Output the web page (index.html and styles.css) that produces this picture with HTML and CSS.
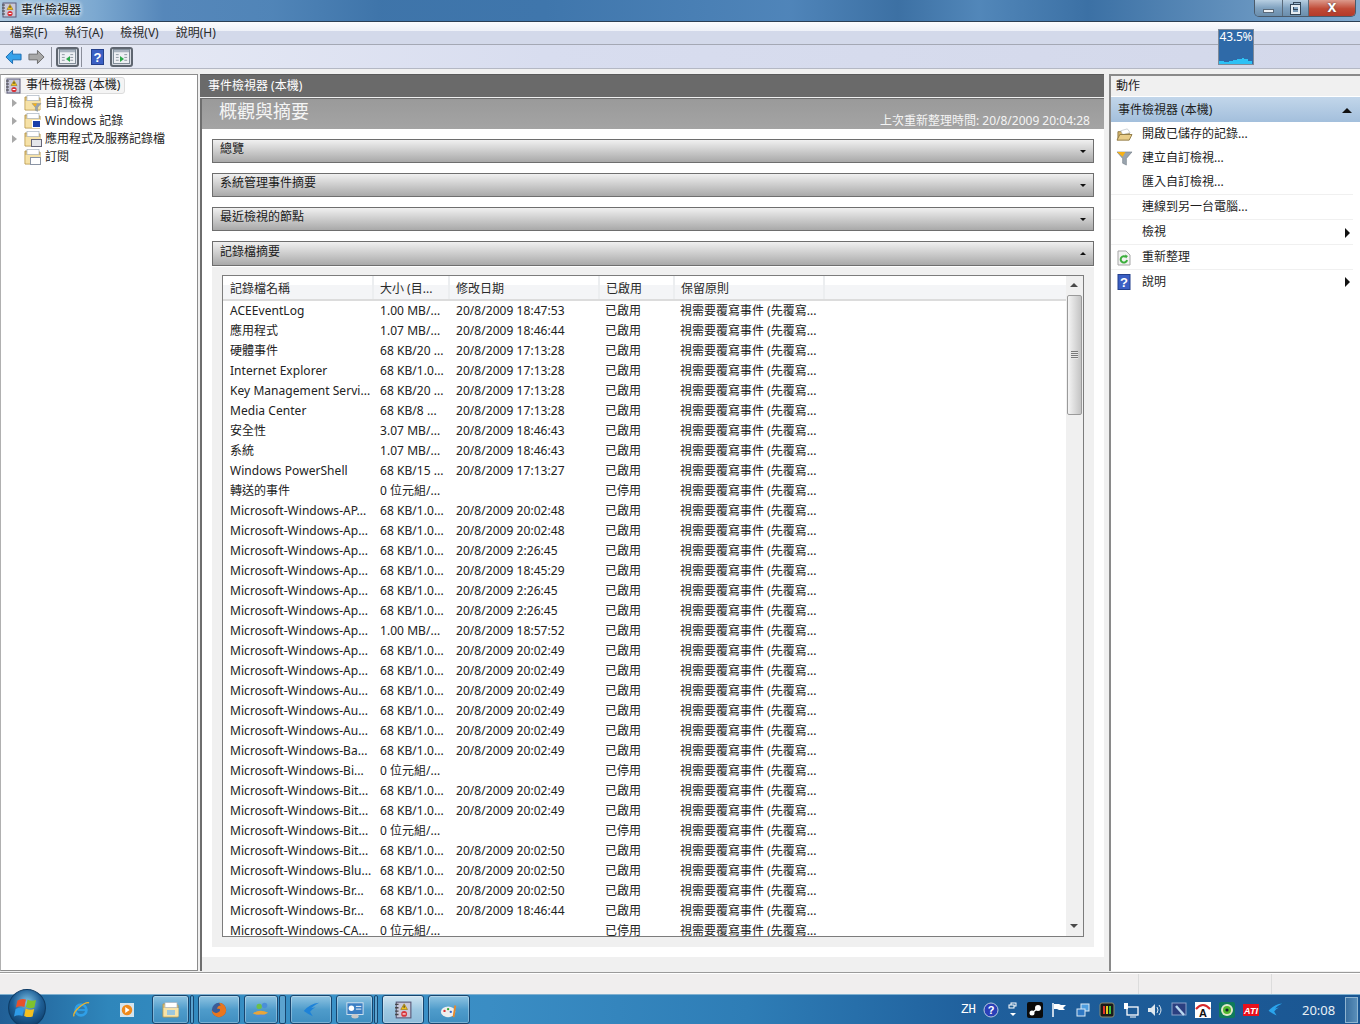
FILE: index.html
```html
<!DOCTYPE html>
<html lang="zh-Hant">
<head>
<meta charset="utf-8">
<title>事件檢視器</title>
<link rel="stylesheet" href="styles.css">
</head>
<body>
<svg class="defs" width="0" height="0">
  <defs>
    <symbol id="i-app" viewBox="0 0 16 16">
      <rect x="2" y="1" width="13" height="14" fill="#c8c8d8" stroke="#5a5a78"/>
      <path d="M1 3h3M1 6h3M1 9h3M1 12h3" stroke="#444" stroke-width="1.2"/>
      <path d="M9 2.5l3 5H6z" fill="#f2c21a" stroke="#8a6a00" stroke-width=".5"/>
      <rect x="8.5" y="4" width="1" height="2" fill="#333"/>
      <circle cx="9" cy="11.5" r="2.6" fill="#d8333a"/>
      <rect x="7.6" y="11" width="2.8" height="1" fill="#fff"/>
    </symbol>
    <symbol id="i-folder" viewBox="0 0 18 18">
      <path d="M1 3h6l1 1h8v12H1z" fill="#e8c879" stroke="#b89a52"/>
      <rect x="3" y="1.5" width="12" height="5" fill="#fff" stroke="#a8b4c0" stroke-width=".7"/>
      <path d="M1.5 7h15v8.500h-15z" fill="#f6e2a8"/>
    </symbol>
    <symbol id="i-open" viewBox="0 0 18 16">
      <path d="M2 14V5h5l1 1h6v2" fill="#d8b66a" stroke="#8f7a44"/>
      <path d="M5 4l7-2 3 4-8 2z" fill="#fff" stroke="#aab2ba" stroke-width=".6"/>
      <path d="M1 14l3-6h13l-3 6z" fill="#e8cc88" stroke="#8f7a44"/>
    </symbol>
    <symbol id="i-left" viewBox="0 0 18 16">
      <path d="M1 8l7-7v4h9v6H8v4z" fill="#37a2ea" stroke="#1a6ab0"/>
    </symbol>
    <symbol id="i-right" viewBox="0 0 18 16">
      <path d="M17 8l-7-7v4H1v6h9v4z" fill="#a8a8a8" stroke="#6a6a6a"/>
    </symbol>
    <symbol id="i-help" viewBox="0 0 13 16">
      <rect x=".5" y=".5" width="12" height="15" fill="#3b5fc4" stroke="#24408c"/>
      <text x="6.500" y="13" text-anchor="middle" font-size="13" font-family="Liberation Sans" font-weight="bold" fill="#fff">?</text>
    </symbol>
    <symbol id="i-pane" viewBox="0 0 18 16">
      <rect x=".5" y=".5" width="17" height="15" fill="#eef0f4" stroke="#7b8794"/>
      <rect x="1" y="1" width="16" height="2.500" fill="#a9b3bf"/>
      <path d="M3 6h3M3 9h3M3 12h3M12 6h3M12 9h3M12 12h3" stroke="#8a949e"/>
    </symbol>
    <symbol id="i-funnel" viewBox="0 0 18 16">
      <path d="M1 1h16l-6 7v7l-4-2V8z" fill="#9aa4ae" stroke="#6d7780" stroke-width=".6"/>
      <path d="M1 1h9l-3 5z" fill="#f7b115"/>
    </symbol>
    <symbol id="i-refresh" viewBox="0 0 14 16">
      <path d="M1 1h8l4 4v10H1z" fill="#f2f2f2" stroke="#a5a5a5"/>
      <path d="M10 10a3.200 3.200 0 1 1-1-3" fill="none" stroke="#3cae3c" stroke-width="2"/>
      <path d="M8 4.500l3 1.500-2 2.500z" fill="#3cae3c"/>
    </symbol>
  </defs>
</svg>

<div class="window">
  <header class="titlebar">
    <svg class="ico16"><use href="#i-app"/></svg>
    <span class="title-text">事件檢視器</span>
    <div class="caption-btns">
      <span class="cap cap-min"><i class="min-bar"></i></span>
      <span class="cap cap-max"><i class="max-back"></i><i class="max-front"></i></span>
      <span class="cap cap-close">x</span>
    </div>
  </header>

  <nav class="menubar">
    <span>檔案(F)</span><span>執行(A)</span><span>檢視(V)</span><span>說明(H)</span>
  </nav>

  <div class="toolbar">
    <svg class="tb-arrow"><use href="#i-left"/></svg>
    <svg class="tb-arrow tb-fwd"><use href="#i-right"/></svg>
    <i class="tb-sep tb-sep1"></i>
    <span class="tb-btn tb-btn1"><svg class="ico-pane"><use href="#i-pane"/></svg><i class="pane-tri pane-left"></i></span>
    <i class="tb-sep tb-sep2"></i>
    <svg class="tb-help"><use href="#i-help"/></svg>
    <span class="tb-btn tb-btn2"><svg class="ico-pane"><use href="#i-pane"/></svg><i class="pane-tri pane-right"></i></span>
  </div>

  <div class="cpu">
    <span class="cpu-val">43.5%</span>
    <svg class="cpu-graph" viewBox="0 0 34 6" preserveAspectRatio="none"><path d="M0 6V3h5v1h5V3h4V2h4V1h5V0h2v1h4v2h4v3z" fill="#2dc1f5"/></svg>
  </div>

  <main class="main">
    <aside class="tree">
      <div class="tree-root"><svg class="ico16"><use href="#i-app"/></svg><span>事件檢視器 (本機)</span></div>
      <div class="tree-row"><i class="twist"></i><span class="node-ico"><svg class="ico18"><use href="#i-folder"/></svg><svg class="badge"><use href="#i-funnel"/></svg></span><span>自訂檢視</span></div>
      <div class="tree-row"><i class="twist"></i><span class="node-ico"><svg class="ico18"><use href="#i-folder"/></svg><i class="badge-win"></i></span><span>Windows 記錄</span></div>
      <div class="tree-row"><i class="twist"></i><span class="node-ico"><svg class="ico18"><use href="#i-folder"/></svg><i class="badge-app"></i></span><span>應用程式及服務記錄檔</span></div>
      <div class="tree-row"><i class="twist twist-none"></i><span class="node-ico"><svg class="ico18"><use href="#i-folder"/></svg><i class="badge-sub"></i></span><span>訂閱</span></div>
    </aside>

    <section class="center">
      <div class="center-head">事件檢視器 (本機)</div>
      <div class="center-body">
        <div class="overview-head">
          <h1>概觀與摘要</h1>
          <span class="refreshed">上次重新整理時間: 20/8/2009 20:04:28</span>
        </div>
        <div class="sections">
          <div class="bar"><span>總覽</span><i class="caret-down"></i></div>
          <div class="bar"><span>系統管理事件摘要</span><i class="caret-down"></i></div>
          <div class="bar"><span>最近檢視的節點</span><i class="caret-down"></i></div>
          <div class="bar bar-open"><span>記錄檔摘要</span><i class="caret-up"></i></div>
          <div class="log-panel">
            <div class="list">
              <div class="list-scroll">
                <table class="log">
                  <colgroup><col class="c1"><col class="c2"><col class="c3"><col class="c4"><col class="c5"><col></colgroup>
                  <thead><tr><th>記錄檔名稱</th><th>大小 (目...</th><th>修改日期</th><th>已啟用</th><th>保留原則</th><th></th></tr></thead>
                  <tbody>
                    <tr><td class="lat">ACEEventLog</td><td class="lat">1.00 MB/...</td><td class="lat">20/8/2009 18:47:53</td><td>已啟用</td><td>視需要覆寫事件 (先覆寫...</td><td></td></tr>
                    <tr><td>應用程式</td><td class="lat">1.07 MB/...</td><td class="lat">20/8/2009 18:46:44</td><td>已啟用</td><td>視需要覆寫事件 (先覆寫...</td><td></td></tr>
                    <tr><td>硬體事件</td><td class="lat">68 KB/20 ...</td><td class="lat">20/8/2009 17:13:28</td><td>已啟用</td><td>視需要覆寫事件 (先覆寫...</td><td></td></tr>
                    <tr><td class="lat">Internet Explorer</td><td class="lat">68 KB/1.0...</td><td class="lat">20/8/2009 17:13:28</td><td>已啟用</td><td>視需要覆寫事件 (先覆寫...</td><td></td></tr>
                    <tr><td class="lat">Key Management Servi...</td><td class="lat">68 KB/20 ...</td><td class="lat">20/8/2009 17:13:28</td><td>已啟用</td><td>視需要覆寫事件 (先覆寫...</td><td></td></tr>
                    <tr><td class="lat">Media Center</td><td class="lat">68 KB/8 ...</td><td class="lat">20/8/2009 17:13:28</td><td>已啟用</td><td>視需要覆寫事件 (先覆寫...</td><td></td></tr>
                    <tr><td>安全性</td><td class="lat">3.07 MB/...</td><td class="lat">20/8/2009 18:46:43</td><td>已啟用</td><td>視需要覆寫事件 (先覆寫...</td><td></td></tr>
                    <tr><td>系統</td><td class="lat">1.07 MB/...</td><td class="lat">20/8/2009 18:46:43</td><td>已啟用</td><td>視需要覆寫事件 (先覆寫...</td><td></td></tr>
                    <tr><td class="lat">Windows PowerShell</td><td class="lat">68 KB/15 ...</td><td class="lat">20/8/2009 17:13:27</td><td>已啟用</td><td>視需要覆寫事件 (先覆寫...</td><td></td></tr>
                    <tr><td>轉送的事件</td><td>0 位元組/...</td><td></td><td>已停用</td><td>視需要覆寫事件 (先覆寫...</td><td></td></tr>
                    <tr><td class="lat">Microsoft-Windows-AP...</td><td class="lat">68 KB/1.0...</td><td class="lat">20/8/2009 20:02:48</td><td>已啟用</td><td>視需要覆寫事件 (先覆寫...</td><td></td></tr>
                    <tr><td class="lat">Microsoft-Windows-Ap...</td><td class="lat">68 KB/1.0...</td><td class="lat">20/8/2009 20:02:48</td><td>已啟用</td><td>視需要覆寫事件 (先覆寫...</td><td></td></tr>
                    <tr><td class="lat">Microsoft-Windows-Ap...</td><td class="lat">68 KB/1.0...</td><td class="lat">20/8/2009 2:26:45</td><td>已啟用</td><td>視需要覆寫事件 (先覆寫...</td><td></td></tr>
                    <tr><td class="lat">Microsoft-Windows-Ap...</td><td class="lat">68 KB/1.0...</td><td class="lat">20/8/2009 18:45:29</td><td>已啟用</td><td>視需要覆寫事件 (先覆寫...</td><td></td></tr>
                    <tr><td class="lat">Microsoft-Windows-Ap...</td><td class="lat">68 KB/1.0...</td><td class="lat">20/8/2009 2:26:45</td><td>已啟用</td><td>視需要覆寫事件 (先覆寫...</td><td></td></tr>
                    <tr><td class="lat">Microsoft-Windows-Ap...</td><td class="lat">68 KB/1.0...</td><td class="lat">20/8/2009 2:26:45</td><td>已啟用</td><td>視需要覆寫事件 (先覆寫...</td><td></td></tr>
                    <tr><td class="lat">Microsoft-Windows-Ap...</td><td class="lat">1.00 MB/...</td><td class="lat">20/8/2009 18:57:52</td><td>已啟用</td><td>視需要覆寫事件 (先覆寫...</td><td></td></tr>
                    <tr><td class="lat">Microsoft-Windows-Ap...</td><td class="lat">68 KB/1.0...</td><td class="lat">20/8/2009 20:02:49</td><td>已啟用</td><td>視需要覆寫事件 (先覆寫...</td><td></td></tr>
                    <tr><td class="lat">Microsoft-Windows-Ap...</td><td class="lat">68 KB/1.0...</td><td class="lat">20/8/2009 20:02:49</td><td>已啟用</td><td>視需要覆寫事件 (先覆寫...</td><td></td></tr>
                    <tr><td class="lat">Microsoft-Windows-Au...</td><td class="lat">68 KB/1.0...</td><td class="lat">20/8/2009 20:02:49</td><td>已啟用</td><td>視需要覆寫事件 (先覆寫...</td><td></td></tr>
                    <tr><td class="lat">Microsoft-Windows-Au...</td><td class="lat">68 KB/1.0...</td><td class="lat">20/8/2009 20:02:49</td><td>已啟用</td><td>視需要覆寫事件 (先覆寫...</td><td></td></tr>
                    <tr><td class="lat">Microsoft-Windows-Au...</td><td class="lat">68 KB/1.0...</td><td class="lat">20/8/2009 20:02:49</td><td>已啟用</td><td>視需要覆寫事件 (先覆寫...</td><td></td></tr>
                    <tr><td class="lat">Microsoft-Windows-Ba...</td><td class="lat">68 KB/1.0...</td><td class="lat">20/8/2009 20:02:49</td><td>已啟用</td><td>視需要覆寫事件 (先覆寫...</td><td></td></tr>
                    <tr><td class="lat">Microsoft-Windows-Bi...</td><td>0 位元組/...</td><td></td><td>已停用</td><td>視需要覆寫事件 (先覆寫...</td><td></td></tr>
                    <tr><td class="lat">Microsoft-Windows-Bit...</td><td class="lat">68 KB/1.0...</td><td class="lat">20/8/2009 20:02:49</td><td>已啟用</td><td>視需要覆寫事件 (先覆寫...</td><td></td></tr>
                    <tr><td class="lat">Microsoft-Windows-Bit...</td><td class="lat">68 KB/1.0...</td><td class="lat">20/8/2009 20:02:49</td><td>已啟用</td><td>視需要覆寫事件 (先覆寫...</td><td></td></tr>
                    <tr><td class="lat">Microsoft-Windows-Bit...</td><td>0 位元組/...</td><td></td><td>已停用</td><td>視需要覆寫事件 (先覆寫...</td><td></td></tr>
                    <tr><td class="lat">Microsoft-Windows-Bit...</td><td class="lat">68 KB/1.0...</td><td class="lat">20/8/2009 20:02:50</td><td>已啟用</td><td>視需要覆寫事件 (先覆寫...</td><td></td></tr>
                    <tr><td class="lat">Microsoft-Windows-Blu...</td><td class="lat">68 KB/1.0...</td><td class="lat">20/8/2009 20:02:50</td><td>已啟用</td><td>視需要覆寫事件 (先覆寫...</td><td></td></tr>
                    <tr><td class="lat">Microsoft-Windows-Br...</td><td class="lat">68 KB/1.0...</td><td class="lat">20/8/2009 20:02:50</td><td>已啟用</td><td>視需要覆寫事件 (先覆寫...</td><td></td></tr>
                    <tr><td class="lat">Microsoft-Windows-Br...</td><td class="lat">68 KB/1.0...</td><td class="lat">20/8/2009 18:46:44</td><td>已啟用</td><td>視需要覆寫事件 (先覆寫...</td><td></td></tr>
                    <tr><td class="lat">Microsoft-Windows-CA...</td><td>0 位元組/...</td><td></td><td>已停用</td><td>視需要覆寫事件 (先覆寫...</td><td></td></tr>
                  </tbody>
                </table>
              </div>
              <div class="scrollbar">
                <i class="sb-arrow sb-up"></i>
                <div class="sb-thumb"><i class="sb-grip"></i></div>
                <i class="sb-fill"></i>
                <i class="sb-arrow sb-down"></i>
              </div>
            </div>
          </div>
        </div>
        <div class="center-foot"></div>
      </div>
    </section>

    <aside class="actions">
      <div class="actions-head">動作</div>
      <div class="actions-sub"><span>事件檢視器 (本機)</span><i class="caret-up-lg"></i></div>
      <ul class="action-list">
        <li class="action a23"><span class="act-ico"><svg class="ico-act"><use href="#i-open"/></svg></span><span>開啟已儲存的記錄...</span></li>
        <li class="action a24"><span class="act-ico"><svg class="ico-act"><use href="#i-funnel"/></svg></span><span>建立自訂檢視...</span></li>
        <li class="action a26 sep"><span class="act-ico"></span><span>匯入自訂檢視...</span></li>
        <li class="action sep"><span class="act-ico"></span><span>連線到另一台電腦...</span></li>
        <li class="action sep"><span class="act-ico"></span><span class="grow">檢視</span><i class="submenu"></i></li>
        <li class="action sep"><span class="act-ico"><svg class="ico16"><use href="#i-refresh"/></svg></span><span>重新整理</span></li>
        <li class="action a-last"><span class="act-ico"><svg class="ico16"><use href="#i-help"/></svg></span><span class="grow">說明</span><i class="submenu"></i></li>
      </ul>
    </aside>
  </main>

  <footer class="status"><span class="st-a"></span><span class="st-b"></span><span class="st-c"></span></footer>

  <div class="taskbar">
    <div class="orb">
      <svg viewBox="0 0 36 36" class="orb-svg">
        <defs><radialGradient id="og" cx=".5" cy=".35" r=".7"><stop offset="0" stop-color="#7fc4e8"/><stop offset=".55" stop-color="#1f5f96"/><stop offset="1" stop-color="#0c3a66"/></radialGradient></defs>
        <circle cx="18" cy="18" r="17.500" fill="url(#og)" stroke="#0e3c66"/>
        <path d="M9 11q4-2.500 8-1l-1.500 7q-4-1.500-8 .5z" fill="#e8502a"/>
        <path d="M18.500 10q4 2 8 .5l-1.500 7q-4 1.500-8-.5z" fill="#7fc22e"/>
        <path d="M7.200 19q4-2 8-.5l-1.500 7q-4-1.500-8 .5z" fill="#2f9be8"/>
        <path d="M16.800 18.500q4 2 8 .5l-1.500 7q-4 1.500-8-.5z" fill="#f4c020"/>
      </svg>
    </div>
    <div class="quick">
      <svg class="tk-ico" viewBox="0 0 20 20"><circle cx="10" cy="10" r="6" fill="none" stroke="#2f9fe8" stroke-width="3"/><path d="M6 10h10" stroke="#2f9fe8" stroke-width="2"/><path d="M2 17Q1 13 8 7t11-5" fill="none" stroke="#f0b429" stroke-width="1.500"/></svg>
      <svg class="tk-media" viewBox="0 0 16 16"><rect width="16" height="16" fill="#d4e4ee"/><circle cx="8" cy="8" r="6" fill="#f08a1d"/><path d="M6 4.500l5 3.500-5 3.500z" fill="#fff"/></svg>
    </div>
    <div class="tasks">
      <span class="task t37"><svg class="tk-ico" viewBox="0 0 18 18"><use href="#i-folder"/><rect x="5" y="9" width="8" height="5" fill="#9cc7de"/></svg></span>
      <i class="task-end"></i>
      <span class="task t43"><svg class="tk-ico" viewBox="0 0 20 20"><circle cx="10" cy="10" r="8" fill="#3a5c98"/><path d="M10 2a8 8 0 1 1-8 8q2 4 6 3t3-4q-2-1-3 0 0-4 4-4z" fill="#e8761e"/></svg></span>
      <span class="task t35"><svg class="tk-ico" viewBox="0 0 20 20"><circle cx="8" cy="6" r="3" fill="#6cc04a"/><circle cx="14" cy="5" r="3" fill="#4a8fd8"/><path d="M1 14q7-6 17-1-8 5-17 1z" fill="#e8a53a"/><path d="M3 16q7-2 14 0l-3 2H6z" fill="#4a8fd8"/></svg></span>
      <i class="task-end task-end-wide"></i>
      <span class="task t43"><svg class="tk-ico" viewBox="0 0 20 20"><path d="M2 11Q9 3 19 2q-6 3-9 6l5-1q-4 2-6 5l3 5q-6-3-10-6z" fill="#1e82d8"/></svg></span>
      <span class="task t37"><svg class="tk-ico" viewBox="0 0 20 20"><rect x="1" y="2" width="18" height="13" fill="#3b7fc4" stroke="#dbe8f2"/><circle cx="6" cy="8" r="3" fill="#fff"/><path d="M11 6h6M11 9h6" stroke="#fff"/><ellipse cx="10" cy="17" rx="4" ry="2.500" fill="#c8c8c8"/></svg></span>
      <i class="task-end"></i>
      <span class="task t43 task-active"><svg class="tk-ico"><use href="#i-app"/></svg></span>
      <span class="task t43"><svg class="tk-ico" viewBox="0 0 20 20"><ellipse cx="9" cy="12" rx="8" ry="6" fill="#eee"/><circle cx="5" cy="11" r="1.300" fill="#d33"/><circle cx="9" cy="9" r="1.300" fill="#3a3"/><circle cx="12" cy="12" r="1.300" fill="#36c"/><path d="M15 18l2-13" stroke="#e8882a" stroke-width="2"/></svg></span>
    </div>
    <div class="tray">
      <span class="lang">ZH</span>
      <svg class="tr tr-tight" viewBox="0 0 16 16"><circle cx="8" cy="8" r="7" fill="#2a3fb8" stroke="#b8c8e0"/><text x="8" y="12" text-anchor="middle" font-size="11" font-family="Liberation Sans" font-weight="bold" fill="#fff">?</text></svg>
      <svg class="tr tr-tight" viewBox="0 0 16 16"><rect x="6" y="1" width="5" height="3" fill="none" stroke="#fff"/><rect x="4" y="3" width="5" height="3" fill="#1f5f96" stroke="#fff"/><path d="M5 11h6l-3 3z" fill="#fff"/></svg>
      <svg class="tr" viewBox="0 0 16 16"><rect width="16" height="16" rx="2" fill="#0b0b0b"/><circle cx="11" cy="6" r="3" fill="#fff"/><circle cx="5" cy="11" r="2.500" fill="#fff"/><path d="M5 11l6-5" stroke="#fff" stroke-width="1.500"/></svg>
      <svg class="tr" viewBox="0 0 16 16"><path d="M2 1v14" stroke="#fff" stroke-width="1.500"/><path d="M3 2h5l2 1h5l-3 3 2 2h-6l-2-1H3z" fill="#fff"/></svg>
      <svg class="tr" viewBox="0 0 16 16"><rect x="6" y="2" width="8" height="7" fill="#4f9ee0" stroke="#dceaf5"/><rect x="2" y="7" width="8" height="7" fill="#2f78c4" stroke="#dceaf5"/></svg>
      <svg class="tr" viewBox="0 0 16 16"><rect x="1" y="1" width="14" height="14" rx="2" fill="#1a1a1a" stroke="#8a8a70"/><path d="M5 4v8" stroke="#e0342a" stroke-width="2"/><path d="M8 4v8" stroke="#e8c820" stroke-width="2"/><path d="M11 4v8" stroke="#34c040" stroke-width="2"/></svg>
      <svg class="tr" viewBox="0 0 16 16"><rect x="4" y="5" width="11" height="8" fill="none" stroke="#fff" stroke-width="1.300"/><rect x="1" y="1" width="4" height="6" fill="#fff"/><path d="M7 15h6" stroke="#fff"/></svg>
      <svg class="tr" viewBox="0 0 16 16"><path d="M1 6h3l4-4v12l-4-4H1z" fill="#dfe8ef"/><path d="M10 5q2 3 0 6M12 3q4 5 0 10" fill="none" stroke="#dfe8ef"/></svg>
      <svg class="tr" viewBox="0 0 16 16"><rect x="1" y="1" width="14" height="12" fill="#2b3f80" stroke="#8ca0c8"/><path d="M5 4l8 9" stroke="#b8d8f0" stroke-width="2.500"/></svg>
      <svg class="tr" viewBox="0 0 16 16"><rect width="16" height="16" fill="#fff"/><path d="M1 7Q8-1 15 7" fill="none" stroke="#d8282a" stroke-width="2"/><text x="8" y="15" text-anchor="middle" font-size="11" font-family="Liberation Sans" font-weight="bold" fill="#111">A</text></svg>
      <svg class="tr" viewBox="0 0 16 16"><rect width="16" height="16" rx="2" fill="#0e7a5a"/><circle cx="8" cy="8" r="6" fill="#e0e8c8"/><circle cx="8" cy="8" r="4" fill="#52b82e"/><circle cx="8" cy="8" r="1.600" fill="#123"/></svg>
      <svg class="tr" viewBox="0 0 16 16"><rect y="2" width="16" height="12" fill="#e8101c"/><text x="8" y="11.500" text-anchor="middle" font-size="9" font-family="Liberation Sans" font-weight="bold" font-style="italic" fill="#fff">ATI</text></svg>
      <svg class="tr" viewBox="0 0 20 20"><path d="M2 11Q9 3 19 2q-6 3-9 6l5-1q-4 2-6 5l3 5q-6-3-10-6z" fill="#2aa4ec"/></svg>
      <span class="clock">20:08</span>
      <i class="show-desktop"></i>
    </div>
  </div>
</div>
</body>
</html>
```

FILE: styles.css
```css
* { box-sizing: border-box; }
html, body { margin: 0; padding: 0; }
body {
  width: 1360px;
  height: 1024px;
  overflow: hidden;
  font: 12px/1.2 "Noto Sans", "Noto Sans CJK TC", sans-serif;
  color: #1e1e1e;
  background: #f0f0f0;
}
.defs { position: absolute; }
i { display: block; }
svg { display: block; }
.ico16 { width: 16px; height: 16px; flex: none; }
.ico18 { width: 18px; height: 18px; flex: none; }
.ico-act { width: 17px; height: 15px; }

.window { position: relative; display: flex; flex-direction: column; height: 1024px; }

/* title bar */
.titlebar {
  display: flex; align-items: center; gap: 4px;
  height: 22px; padding: 0 4px 1px 1px; flex: none;
  border-bottom: 1px solid #2b3f55;
  background:
    linear-gradient(90deg, rgba(190,214,232,.85) 0, rgba(150,190,224,.7) 7%, rgba(108,152,200,.5) 12%, rgba(120,166,210,.3) 20%, rgba(60,110,160,.2) 28%, rgba(60,110,160,0) 40%, rgba(110,160,210,.35) 58%, rgba(50,90,130,.2) 66%, rgba(110,160,205,.4) 72%, rgba(45,90,135,.2) 80%, rgba(160,195,225,.7) 100%),
    #3f76ac;
}
.title-text { font-size: 12px; color: #111; text-shadow: 0 0 4px #fff, 0 0 4px #fff; }
.caption-btns {
  margin-left: auto; display: flex; align-self: flex-start; height: 17px;
  border: 1px solid #4a5a6a; border-top: 0; border-radius: 0 0 5px 5px; overflow: hidden;
}
.cap { display: flex; align-items: center; justify-content: center; position: relative; height: 16px; border-right: 1px solid #5a6a7a; background: linear-gradient(#b8cfe2, #80a2c0 50%, #6b8eac); }
.cap-min { width: 28px; }
.cap-max { width: 26px; }
.cap-close { width: 46px; border-right: 0; padding-bottom: 3px; background: linear-gradient(#dc9a8c, #c04a36 55%, #b43a2a); color: #fff; font: bold 16px/13px "Liberation Sans", sans-serif; text-shadow: 0 0 2px #444; }
.min-bar { width: 11px; height: 4px; margin-top: 5px; background: #eef2f6; border: 1px solid #5a6a7a; }
.max-back { position: absolute; left: 10px; top: 2px; width: 8px; height: 8px; border: 1px solid #33475a; }
.max-front { position: absolute; left: 8px; top: 5px; width: 9px; height: 9px; border: 2px solid #e4ecf2; outline: 1px solid #33475a; }

/* menu + toolbar */
.menubar {
  display: flex; align-items: center; gap: 17px;
  height: 23px; padding: 0 10px; flex: none;
  background: linear-gradient(#fbfcfe 0, #eef1f8 40%, #d3d9ea 41%, #d3d9ea 100%);
  border-bottom: 1px solid #a4a8b4;
  color: #2a2a2a;
}
.toolbar {
  display: flex; align-items: center;
  height: 24px; padding: 0 5px; flex: none;
  background: linear-gradient(90deg, #e9ecf6 0, #d8ddef 40%, #d3d8ea 100%);
  border-bottom: 1px solid #b4b8c4;
}
.tb-arrow { width: 17px; height: 16px; }
.tb-fwd { margin-left: 6px; }
.tb-sep { width: 1px; height: 20px; background: #8a8e9a; }
.tb-sep1 { margin-left: 6px; }
.tb-sep2 { margin-left: 2px; }
.tb-btn { position: relative; display: flex; align-items: center; justify-content: center; width: 23px; height: 20px; background: #d8dce4; border: 2px solid #5f6670; border-radius: 3px; }
.tb-btn1 { margin-left: 4px; }
.tb-btn2 { margin-left: 6px; }
.ico-pane { width: 17px; height: 15px; }
.tb-help { width: 13px; height: 16px; margin-left: 9px; }
.pane-tri { position: absolute; top: 7px; left: 8px; width: 0; height: 0; border-top: 3px solid transparent; border-bottom: 3px solid transparent; }
.pane-left { border-right: 4px solid #2aa848; }
.pane-right { border-left: 4px solid #2aa848; }

.cpu { position: absolute; left: 1218px; top: 29px; width: 36px; height: 36px; background: #2f6aa8; border: 1px solid #7f8a99; display: flex; flex-direction: column; color: #fff; overflow: hidden; }
.cpu-val { font: 12px/14px "Noto Sans", sans-serif; text-align: center; letter-spacing: -.2px; }
.cpu-graph { width: 34px; height: 6px; margin-top: auto; }

/* main */
.main { flex: none; display: flex; height: 899px; margin-top: 5px; background: #f0f0f0; border-bottom: 1px solid #9a9a9a; }

.tree { flex: none; width: 198px; height: 897px; background: #fff; border: 1px solid #8c8c8c; border-left-color: #b0b0b0; padding: 2px 3px; }
.tree-root { display: flex; align-items: center; gap: 5px; width: 121px; height: 17px; background: #f4f4f4; border: 1px solid #dcdcdc; border-radius: 3px; white-space: nowrap; }
.tree-row { display: flex; align-items: center; height: 18px; white-space: nowrap; padding-left: 8px; }
.twist { width: 0; height: 0; margin-right: 7px; border-top: 4px solid transparent; border-bottom: 4px solid transparent; border-left: 5px solid #a8a8a8; }
.twist-none { border-left-color: transparent; }
.node-ico { position: relative; flex: none; width: 18px; height: 18px; margin-right: 3px; }
.badge { position: absolute; left: 7px; top: 9px; width: 11px; height: 9px; }
.badge-win { position: absolute; left: 8px; top: 8px; width: 9px; height: 8px; background: #1a3fa8; border: 1px solid #fff; }
.badge-app { position: absolute; left: 7px; top: 9px; width: 11px; height: 8px; background: #e4e6ea; border: 1px solid #667; }
.badge-sub { position: absolute; left: 6px; top: 9px; width: 11px; height: 8px; background: #fff; border: 1px solid #8a94a4; }

.center { flex: none; width: 904px; margin-left: 2px; display: flex; flex-direction: column; height: 897px; }
.center-head { height: 23px; line-height: 21px; padding-left: 8px; flex: none; background: #6a6a6a; color: #fff; border-top: 1px solid #5a5a5a; }
.center-body { flex: 1; display: flex; flex-direction: column; margin-top: 1px; background: #fff; border-left: 2px solid #6e6e6e; border-top: 1px solid #6e6e6e; min-height: 0; }
.overview-head { display: flex; height: 30px; flex: none; background: linear-gradient(#9a9a9a, #a4a4a4); color: #fff; padding: 0 14px 0 17px; justify-content: space-between; }
.overview-head h1 { margin: 0; font-size: 18px; font-weight: 400; line-height: 24px; color: #f4f4f4; }
.refreshed { align-self: flex-end; font-size: 12px; line-height: 16px; color: #f4f4f4; }

.sections { padding: 10px 10px 0; display: flex; flex-direction: column; flex: none; }
.bar { display: flex; align-items: center; justify-content: space-between; height: 24px; margin-bottom: 10px; padding: 0 7px; border: 1px solid #6e6e6e; background: linear-gradient(#f0f0f0, #a9a9a9); color: #1a1a1a; }
.bar span { margin-top: -3px; }
.bar-open { height: 25px; margin-bottom: 1px; }
.caret-down { width: 0; height: 0; border-left: 3px solid transparent; border-right: 3px solid transparent; border-top: 3px solid #111; }
.caret-up { width: 0; height: 0; border-left: 3px solid transparent; border-right: 3px solid transparent; border-bottom: 3px solid #111; }

.log-panel { height: 680px; padding: 8px 10px 10px; background: #f0f0f0; }
.list { display: flex; height: 662px; background: #fff; border: 1px solid #7c7c7c; }
.list-scroll { flex: 1; min-width: 0; overflow: hidden; }
.log { width: 100%; border-collapse: collapse; table-layout: fixed; }
.c1 { width: 150px; }
.c2 { width: 76px; }
.c3 { width: 150px; }
.c4 { width: 75px; }
.c5 { width: 150px; }
.log th { height: 24px; padding: 3px 0 0 6px; font-weight: 400; text-align: left; white-space: nowrap; color: #2a2a2a; background: linear-gradient(#fff 0, #fff 40%, #f4f5f7 41%); border-bottom: 2px solid #dcdcdc; border-right: 2px solid #eceef0; }
.log th:first-child { padding-left: 7px; }
.log th:last-child { border-right: 0; }
.log td { height: 20px; padding: 2px 0 0 7px; white-space: nowrap; overflow: hidden; color: #222; }
.log td:nth-child(n+4) { padding-left: 6px; }
.lat { letter-spacing: .05px; }

.scrollbar { flex: none; width: 17px; display: flex; flex-direction: column; background: #f0f0f0; }
.sb-arrow { flex: none; height: 19px; position: relative; }
.sb-up::after, .sb-down::after { content: ""; position: absolute; left: 4px; width: 0; height: 0; border-left: 4px solid transparent; border-right: 4px solid transparent; }
.sb-up::after { top: 7px; border-bottom: 4px solid #4a4a4a; }
.sb-down::after { top: 7px; border-top: 4px solid #4a4a4a; }
.sb-thumb { flex: none; height: 120px; margin: 0 1px; display: flex; align-items: center; justify-content: center; border: 1px solid #9a9a9a; border-radius: 2px; background: linear-gradient(90deg, #f4f4f4, #dcdcdc 50%, #c4c4c4); }
.sb-grip { width: 7px; height: 8px; background: repeating-linear-gradient(#7a7a7a 0, #7a7a7a 1px, #e8e8e8 1px, #e8e8e8 2px); }
.sb-fill { flex: 1; }

.center-foot { flex: 1; margin-top: 10px; background: #f0f0f0; }

.actions { flex: none; width: 251px; margin-left: 5px; height: 897px; display: flex; flex-direction: column; background: #fff; border-left: 2px solid #8a8a8a; border-top: 2px solid #8a8a8a; }
.actions-head { height: 21px; line-height: 19px; padding-left: 5px; flex: none; background: #f0f0f0; border-bottom: 1px solid #fff; }
.actions-sub { display: flex; align-items: center; justify-content: space-between; height: 25px; padding: 1px 8px 0 7px; flex: none; background: linear-gradient(#c2d6ea, #a3bfdc); }
.caret-up-lg { width: 0; height: 0; border-left: 5px solid transparent; border-right: 5px solid transparent; border-bottom: 5px solid #111; }
.action-list { list-style: none; margin: 0; padding: 0; }
.action { display: flex; align-items: center; height: 25px; margin: 0 7px 0 0; padding: 1px 3px 0 5px; }
.a23 { height: 23px; padding-top: 2px; }
.a24 { height: 24px; padding-top: 2px; }
.a26 { height: 26px; }
.a-last { padding: 0 3px 1px 5px; }
.action.sep { border-bottom: 1px solid #f0f0f0; }
.act-ico { flex: none; width: 26px; }
.grow { flex: 1; }
.submenu { width: 0; height: 0; border-top: 5px solid transparent; border-bottom: 5px solid transparent; border-left: 5px solid #111; }

/* status */
.status { flex: none; display: flex; height: 21px; background: #f0eeee; border-top: 1px solid #fff; }
.st-a { width: 1139px; border-right: 1px solid #dcdcdc; }
.st-b { width: 133px; border-right: 1px solid #dcdcdc; }
.st-c { flex: 1; }

/* taskbar */
.taskbar {
  flex: none; display: flex; align-items: center; height: 30px; position: relative;
  background: linear-gradient(90deg, #215f96 0, #2f86bb 8%, #3a92c8 25%, #3a8dc4 36%, #2e7db6 55%, #1f5f9c 72%, #1a5692 100%);
  border-top: 1px solid #7fb0d0;
}
.orb { position: absolute; left: 8px; bottom: -3px; width: 38px; height: 38px; }
.orb-svg { width: 38px; height: 38px; }
.quick { display: flex; align-items: center; gap: 30px; margin-left: 72px; }
.tk-ico { width: 18px; height: 18px; flex: none; }
.tk-media { width: 14px; height: 14px; flex: none; }
.tasks { display: flex; align-items: center; gap: 4px; margin-left: 18px; height: 29px; }
.task { display: flex; align-items: center; justify-content: center; height: 29px; border: 1px solid #17456e; border-radius: 3px; background: linear-gradient(#8fc4e2, #4f9ccb 50%, #3f8ec0); box-shadow: inset 0 0 0 1px rgba(255,255,255,.3); }
.t37 { width: 37px; }
.t43 { width: 42px; }
.t35 { width: 34px; }
.task-active { background: linear-gradient(#cfe4f1, #9fc9e2 50%, #8fbcda); }
.task-end { width: 4px; height: 29px; margin-left: -3px; border: 1px solid #17456e; border-radius: 2px; background: #5ba3cf; }
.task-end-wide { width: 7px; }
.tray { margin-left: auto; display: flex; align-items: center; height: 29px; color: #fff; }
.lang { font: 13px "Liberation Mono", monospace; width: 22px; letter-spacing: -.5px; }
.tr { width: 16px; height: 16px; flex: none; margin-right: 8px; }
.tr-tight { margin-right: 6px; }
.clock { width: 43px; margin-left: 11px; font: 13px "Noto Sans", sans-serif; color: #e8f0f6; }
.show-desktop { width: 13px; height: 26px; margin: 0 2px 0 0; background: linear-gradient(90deg, #3a6f9f, #5a8fba); border: 1px solid #8fb4d0; }
```
